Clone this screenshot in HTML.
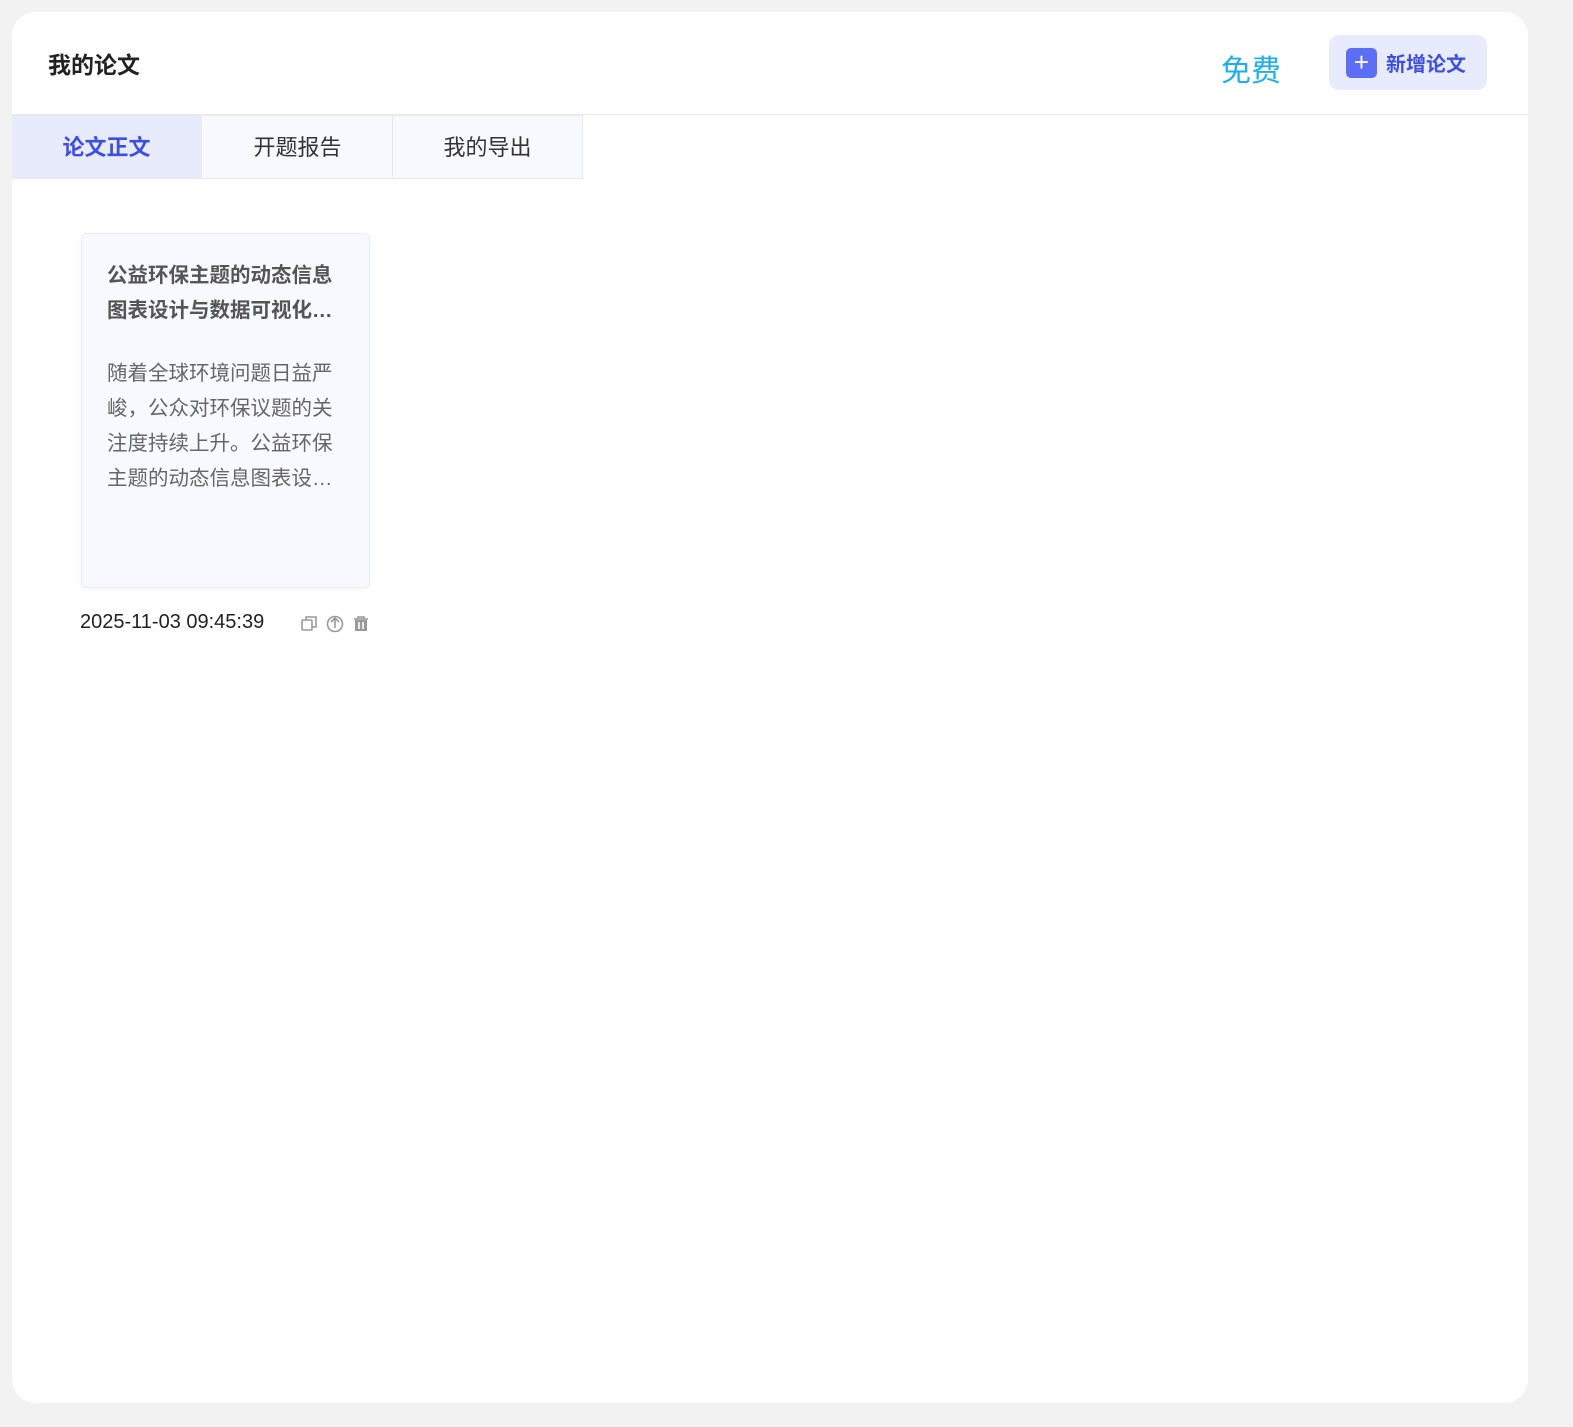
<!DOCTYPE html>
<html><head><meta charset="utf-8"><style>
*{margin:0;padding:0;box-sizing:border-box}
body{width:1573px;height:1427px;background:#f2f2f2;font-family:"Liberation Sans","Noto Sans CJK SC",sans-serif;position:relative;overflow:hidden}
.main{position:absolute;left:12px;top:12px;width:1516px;height:1391px;background:#fff;border-radius:24px;overflow:hidden}
.title{position:absolute;left:36px;top:34px;font-size:23px;font-weight:bold;color:#222}
.hdr{position:absolute;left:0;top:102px;width:100%;border-top:1px solid #ebebeb}
.free{position:absolute;left:1209px;top:34px;font-size:30px;color:#1ab0f0}
.btn{position:absolute;left:1317px;top:23px;width:158px;height:55px;background:#e8ebfc;border-radius:10px}
.btn .ic{position:absolute;left:17px;top:13px;width:31px;height:30px;background:#5c6ef5;border-radius:5px;color:#fff;font-size:26px;line-height:28px;text-align:center}
.btn span{position:absolute;left:57px;top:13px;font-size:20px;font-weight:bold;color:#3d4fe0}
.tab{position:absolute;top:103px;height:64px;width:190px;background:#f8f9fe;border:1px solid #e8e8ee;border-left:none;text-align:center;line-height:64px;font-size:22px;color:#333}
.card{position:absolute;left:69px;top:221px;width:289px;height:353px;background:#f8f9fe;border:1px solid #ececf2;border-radius:6px;box-shadow:0 2px 8px rgba(0,0,0,0.04)}
.ct{position:absolute;left:25px;top:24px;width:232px;font-size:20.5px;font-weight:bold;color:#555;line-height:35px}
.cb{position:absolute;left:25px;top:122px;width:232px;font-size:20.5px;color:#666;line-height:35px}
.date{position:absolute;left:68px;top:599px;font-size:20px;color:#222}
</style></head><body>
<div class="main">
<div class="title">我的论文</div>
<div class="free">免费</div>
<div class="btn"><div class="ic">+</div><span>新增论文</span></div>
<div class="hdr"></div>
<div class="tab" style="left:0;background:#e8ebfc;color:#3d4fe0;font-weight:bold">论文正文</div>
<div class="tab" style="left:191px">开题报告</div>
<div class="tab" style="left:381px">我的导出</div>
<div class="card" style="height:355px">
<div class="ct">公益环保主题的动态信息图表设计与数据可视化…</div>
<div class="cb">随着全球环境问题日益严峻，公众对环保议题的关注度持续上升。公益环保主题的动态信息图表设…</div>
</div>
<div class="date">2025-11-03 09:45:39</div>
<svg style="position:absolute;left:288px;top:602px" width="90" height="20" viewBox="0 0 90 20" fill="none" stroke="#999" stroke-width="1.6">
<rect x="2" y="6" width="10" height="10" rx="1"/><path d="M6 6V3h10v10h-4"/>
<circle cx="35" cy="10" r="7.5"/><path d="M35 14V4M31 8l4-4 4 4"/>
<path d="M54 5h14M58 5V3h6v2" /><rect x="55" y="6" width="12" height="11" fill="#999" stroke="none"/><path d="M59 8v7M63 8v7" stroke="#fff"/>
</svg>
</div>
</body></html>
